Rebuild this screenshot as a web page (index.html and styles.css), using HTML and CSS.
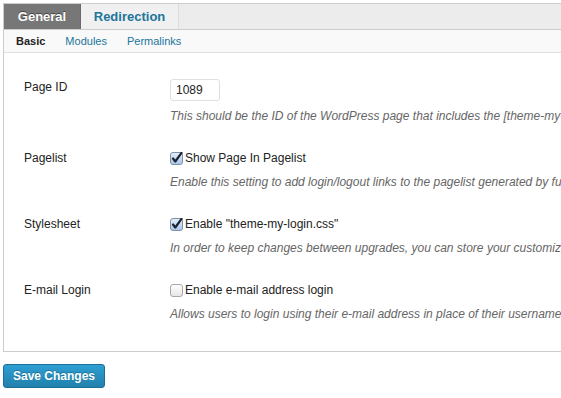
FILE: index.html
```html
<!DOCTYPE html>
<html lang="en">

<head>
    <meta charset="UTF-8">
    <meta name="viewport" content="width=device-width, initial-scale=1.0">
    <title>Theme My Login Settings</title>
    <link rel="stylesheet" href="styles.css">
</head>

<body>
    <div class="wrap">
        <!-- top tabs -->
        <div class="tabs">
            <a class="tab active">General</a>
            <a class="tab">Redirection</a>
        </div>

        <!-- sub navigation -->
        <div class="subnav">
            <a class="sub current">Basic</a>
            <a class="sub">Modules</a>
            <a class="sub">Permalinks</a>
        </div>

        <div class="panel">
            <!-- page id -->
            <div class="row">
                <div class="label">Page ID</div>
                <div class="field">
                    <input class="small-text" type="text" value="1089">
                    <p class="desc">This should be the ID of the WordPress page that includes the [theme-my-login] shortcode. By default, this page is titled "Login".</p>
                </div>
            </div>

            <!-- pagelist -->
            <div class="row">
                <div class="label">Pagelist</div>
                <div class="field">
                    <label class="check">
                        <svg class="box on" width="13" height="13" viewBox="0 0 13 13">
                            <defs>
                                <linearGradient id="g1" x1="0" y1="0" x2="0" y2="1">
                                    <stop offset="0" stop-color="#e4effb" />
                                    <stop offset="1" stop-color="#a9c6ea" />
                                </linearGradient>
                            </defs>
                            <rect x="0.5" y="0.5" width="12" height="12" rx="2.5" fill="url(#g1)" stroke="#7f8fa6" />
                            <path d="M3 6.5 L5.3 9.5 L11.5 0.8" fill="none" stroke="#1c2433" stroke-width="2.2" stroke-linecap="round" stroke-linejoin="round" />
                        </svg>
                        Show Page In Pagelist
                    </label>
                    <p class="desc">Enable this setting to add login/logout links to the pagelist generated by functions like wp_list_pages() and wp_page_menu().</p>
                </div>
            </div>

            <!-- stylesheet -->
            <div class="row">
                <div class="label">Stylesheet</div>
                <div class="field">
                    <label class="check">
                        <svg class="box on" width="13" height="13" viewBox="0 0 13 13">
                            <rect x="0.5" y="0.5" width="12" height="12" rx="2.5" fill="url(#g1)" stroke="#7f8fa6" />
                            <path d="M3 6.5 L5.3 9.5 L11.5 0.8" fill="none" stroke="#1c2433" stroke-width="2.2" stroke-linecap="round" stroke-linejoin="round" />
                        </svg>
                        Enable "theme-my-login.css"
                    </label>
                    <p class="desc">In order to keep changes between upgrades, you can store your customized "theme-my-login.css" in your current theme directory.</p>
                </div>
            </div>

            <!-- email login -->
            <div class="row">
                <div class="label">E-mail Login</div>
                <div class="field">
                    <label class="check">
                        <svg class="box" width="13" height="13" viewBox="0 0 13 13">
                            <defs>
                                <linearGradient id="g2" x1="0" y1="0" x2="0" y2="1">
                                    <stop offset="0" stop-color="#ffffff" />
                                    <stop offset="1" stop-color="#e6e6e6" />
                                </linearGradient>
                            </defs>
                            <rect x="0.5" y="0.5" width="12" height="12" rx="2.5" fill="url(#g2)" stroke="#a8a8a8" />
                        </svg>
                        Enable e-mail address login
                    </label>
                    <p class="desc">Allows users to login using their e-mail address in place of their username.</p>
                </div>
            </div>
        </div>

        <button class="button-primary" type="submit">Save Changes</button>
    </div>
</body>

</html>
```

FILE: styles.css
```css
* {
    box-sizing: border-box;
    margin: 0;
    padding: 0;
}

body {
    font-family: 'Liberation Sans', Arial, sans-serif;
    font-size: 12px;
    color: #333;
    background-color: #fff;
    overflow: hidden;
}

.wrap {
    width: 640px;
    margin: 3px 0 0 3px;
}

/* tabs */

.tabs {
    display: flex;
    height: 27px;
    background-color: #ececec;
    border-top: 1px solid #cccccc;
    border-left: 1px solid #cccccc;
    border-bottom: 1px solid #cccccc;
}

.tab {
    display: flex;
    align-items: center;
    padding: 0 14px;
    font-size: 13px;
    font-weight: 700;
    color: #21759b;
    border-right: 1px solid #dcdcdc;
}

.tab.active {
    width: 77px;
    justify-content: center;
    color: #fff;
    background-color: #777;
    border-right: 1px solid #6a6a6a;
    text-shadow: 0 -1px 0 #444;
}

.tab:nth-child(2) {
    width: 98px;
    justify-content: center;
    background-color: #f0f0f0;
}

/* sub nav */

.subnav {
    display: flex;
    gap: 20px;
    align-items: center;
    height: 23px;
    padding-left: 12px;
    background-color: #f9f9f9;
    border-left: 1px solid #cccccc;
    border-bottom: 1px solid #dfdfdf;
    font-size: 11px;
}

.sub {
    color: #21759b;
}

.sub.current {
    color: #222;
    font-weight: 700;
}

/* panel */

.panel {
    padding: 26px 0 27px 20px;
    border-left: 1px solid #cccccc;
    border-bottom: 1px solid #cccccc;
}

.row {
    display: flex;
    margin-bottom: 22px;
}

.row:last-child {
    margin-bottom: 0;
}

.label {
    width: 146px;
    flex-shrink: 0;
    padding-top: 3px;
    font-size: 12px;
    color: #222;
}

.row:first-child .label {
    padding-top: 1px;
}

.field {
    flex: 1;
}

.small-text {
    display: block;
    width: 50px;
    height: 22px;
    padding: 0 5px;
    border: 1px solid #dfdfdf;
    border-radius: 3px;
    font-family: 'Liberation Sans', Arial, sans-serif;
    font-size: 12px;
    color: #222;
    background-color: #fff;
}

.row:first-child .desc {
    margin-top: 5px;
}

.check {
    display: flex;
    align-items: center;
    gap: 2px;
    height: 20px;
    font-size: 12px;
    color: #222;
}

.box {
    display: block;
    flex-shrink: 0;
}

.desc {
    margin-top: 4px;
    line-height: 20px;
    font-size: 12px;
    font-style: italic;
    color: #666;
    white-space: nowrap;
}

/* button */

.button-primary {
    display: block;
    width: 102px;
    height: 24px;
    margin-top: 12px;
    border: 1px solid #1f6f95;
    border-radius: 3px;
    background: linear-gradient(#2e9fd2, #2180ac);
    color: #fff;
    font-family: 'Liberation Sans', Arial, sans-serif;
    font-size: 12px;
    font-weight: 700;
    text-shadow: 0 -1px 0 rgba(0, 0, 0, 0.25);
}
```
